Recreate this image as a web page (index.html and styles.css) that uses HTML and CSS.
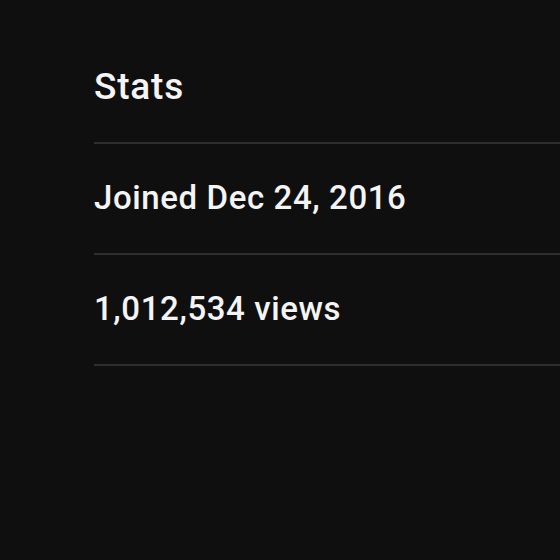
FILE: index.html
```html
<!DOCTYPE html>
<html lang="en">

<head>
    <meta charset="UTF-8">
    <title>Stats</title>
    <link rel="stylesheet" href="styles.css">
</head>

<body>
    <section class="stats">
        <h2 class="stats-title">Stats</h2>
        <div class="stats-row">Joined Dec 24, 2016</div>
        <div class="stats-row">1,012,534 views</div>
    </section>
</body>

</html>
```

FILE: styles.css
```css
body {
    margin: 0;
    background: #0f0f0f;
    color: #f4f4f4;
    font-family: Roboto, "Liberation Sans", sans-serif;
}

.stats {
    padding: 67px 0 0 94px;
}

.stats-title {
    margin: 0;
    padding-bottom: 35px;
    font-size: 37px;
    font-weight: 500;
    line-height: 40px;
    letter-spacing: 0.8px;
    border-bottom: 2px solid #2e2e2e;
}

.stats-row {
    padding: 36px 0 37px;
    font-size: 33px;
    font-weight: 500;
    line-height: 36px;
    letter-spacing: 0.6px;
    border-bottom: 2px solid #2e2e2e;
}
```
